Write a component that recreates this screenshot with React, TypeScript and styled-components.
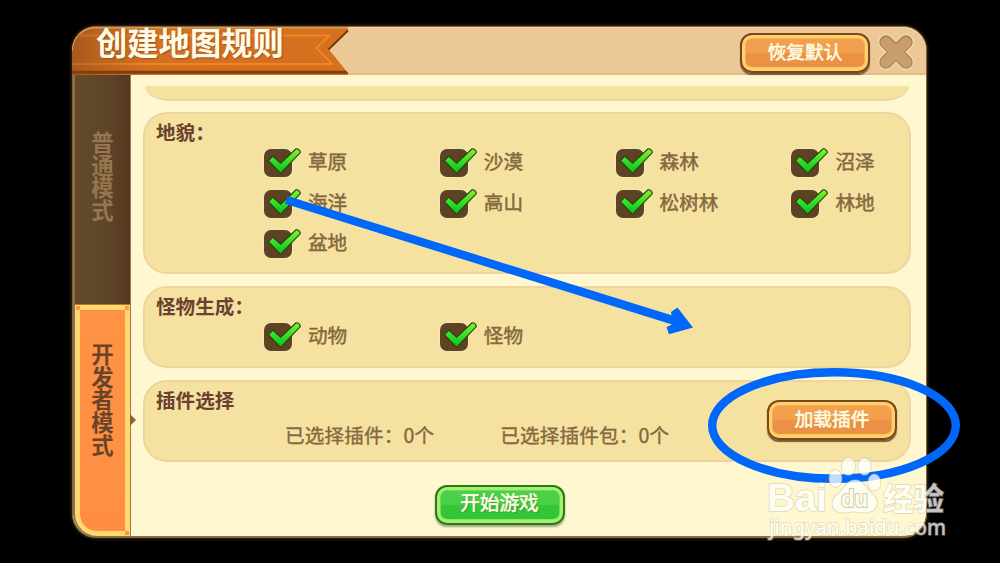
import styled, { createGlobalStyle, css } from 'styled-components';

const TERRAINS = ['草原', '沙漠', '森林', '沼泽', '海洋', '高山', '松树林', '林地', '盆地'];
const CREATURES = ['动物', '怪物'];

export default function App() {
  return (
    <>
      <GlobalStyle />
      <Screen>
        <Dialog>
          <Header>
            <Ribbon />
            <Title>创建地图规则</Title>
            <HeaderActions>
              <GameButton $tone="orange">
                <ButtonText $tone="orange">恢复默认</ButtonText>
              </GameButton>
              <CloseIcon />
            </HeaderActions>
          </Header>
          <Body>
            <Sidebar>
              <NormalTab>普通模式</NormalTab>
              <DeveloperTab>
                <TabCorner $vertical="top" $horizontal="left" />
                <TabCorner $vertical="top" $horizontal="right" />
                <TabCorner $vertical="bottom" $horizontal="right" />
                开发者模式
                <TabPointer />
              </DeveloperTab>
            </Sidebar>
            <Content>
              <ClippedCard />
              <Card $height={162}>
                <CardTitle>地貌：</CardTitle>
                <OptionList items={TERRAINS} />
              </Card>
              <Card $height={82}>
                <CardTitle>怪物生成：</CardTitle>
                <OptionList items={CREATURES} />
              </Card>
              <Card $height={82}>
                <CardTitle>插件选择</CardTitle>
                <PluginRow>
                  <PluginCount>已选择插件：0个</PluginCount>
                  <PluginCount>已选择插件包：0个</PluginCount>
                </PluginRow>
                <LoadButton $tone="orange">
                  <ButtonText $tone="orange">加载插件</ButtonText>
                </LoadButton>
              </Card>
              <StartRow>
                <GameButton $tone="green">
                  <ButtonText $tone="green">开始游戏</ButtonText>
                </GameButton>
              </StartRow>
            </Content>
          </Body>
        </Dialog>
        <Annotations />
        <Watermark />
      </Screen>
    </>
  );
}

function OptionList({ items }: { items: string[] }) {
  return (
    <OptionGrid>
      {items.map((item) => (
        <Option key={item}>
          <CheckIcon />
          <OptionLabel>{item}</OptionLabel>
        </Option>
      ))}
    </OptionGrid>
  );
}

function CheckIcon() {
  return (
    <svg width="40" height="32" viewBox="0 0 40 32">
      <defs>
        <linearGradient id="tick" x1="0" y1="0" x2="0" y2="1">
          <stop offset="0" stopColor="#7ff52c" />
          <stop offset="0.55" stopColor="#2fdc27" />
          <stop offset="1" stopColor="#10bd24" />
        </linearGradient>
      </defs>
      <rect x="1.4" y="2.4" width="29.2" height="29.2" rx="7.4" fill="#f9edbd" />
      <rect x="2" y="3" width="28" height="28" rx="7" fill="#5d4223" />
      <path
        d="M7.2 14.8 L10.8 11 L18.6 18 L34.2 3.4 Q36.6 3 37.9 6.3 L18.6 26.5 Z"
        fill="url(#tick)"
        stroke="#274409"
        strokeWidth="2.2"
        strokeLinejoin="round"
        paintOrder="stroke"
      />
    </svg>
  );
}

function CloseIcon() {
  return (
    <svg width="38" height="38" viewBox="0 0 38 38">
      <g fill="none" strokeLinecap="round">
        <path d="M9 9 L29 29 M29 9 L9 29" stroke="#f5e0b4" strokeWidth="15.4" />
        <path d="M9 9 L29 29 M29 9 L9 29" stroke="#a98252" strokeWidth="13.4" />
        <path d="M9 9.5 L29 29 M29 9.5 L9 29" stroke="#c79e6c" strokeWidth="11" />
      </g>
    </svg>
  );
}

function Ribbon() {
  return (
    <RibbonSvg width="278" height="48" viewBox="0 0 278 48">
      <defs>
        <linearGradient id="ribbon" x1="0" y1="0" x2="1" y2="0">
          <stop offset="0" stopColor="#a65a1d" />
          <stop offset="0.1" stopColor="#bb641d" />
          <stop offset="0.28" stopColor="#d27021" />
          <stop offset="1" stopColor="#d6701f" />
        </linearGradient>
        <linearGradient id="ribbonLine" x1="0" y1="0" x2="1" y2="0">
          <stop offset="0" stopColor="#c06820" />
          <stop offset="0.3" stopColor="#f08522" />
        </linearGradient>
        <clipPath id="ribbonShape">
          <path d="M0 48 V23 A23 23 0 0 1 23 0 H276 V3.5 L256.5 22 L276 46 V48 Z" />
        </clipPath>
      </defs>
      <g clipPath="url(#ribbonShape)">
        <rect width="278" height="48" fill="url(#ribbon)" />
        <path d="M0 24 A23 23 0 0 1 23 0.8 H277" fill="none" stroke="#d69a58" strokeWidth="1.6" />
        <path d="M0 45.3 H276" stroke="#803f0c" strokeWidth="3" />
        <path d="M5 8.5 H257.5 L244.5 21 L260.5 37 H0" fill="none" stroke="url(#ribbonLine)" strokeWidth="1.8" />
      </g>
      <path d="M276 3.5 L256.5 22.5" stroke="#713804" strokeWidth="1.8" />
    </RibbonSvg>
  );
}

function Annotations() {
  return (
    <Overlay width="1000" height="563" viewBox="0 0 1000 563">
      <path
        d="M287.5 196 L671.5 315.3 L671 312 L677.5 307.5 L693 327.5 L669 334.3 L666.5 327 L672 324.5 L285 203.8 Z"
        fill="#0067fb"
      />
      <ellipse cx="834" cy="425.5" rx="121.8" ry="53.2" fill="none" stroke="#0067fb" strokeWidth="8.4" />
    </Overlay>
  );
}

function Watermark() {
  return (
    <WatermarkSvg width="190" height="104" viewBox="0 0 190 104">
      <g fill="#ffffff" stroke="#bdb69c" strokeOpacity="0.6" strokeWidth="1.6" paintOrder="stroke">
        <BrandText x="7" y="60" fontSize="39.5" textLength="60" lengthAdjust="spacingAndGlyphs">
          Bai
        </BrandText>
        <ellipse cx="75.5" cy="27.5" rx="6.3" ry="8.6" />
        <ellipse cx="88.5" cy="15.5" rx="6.7" ry="8.8" />
        <ellipse cx="104.5" cy="15.5" rx="6.5" ry="8.6" />
        <ellipse cx="114.3" cy="31.5" rx="6.3" ry="8.2" />
        <path d="M95 29 C103 29 105 37 112 43 C120 49 118 61 106 61.5 C101 62 98 60.5 94.5 60.5 C90 60.5 87 62 82.5 61.5 C70 61 70 49 78 43 C85 37 87 29 95 29 Z" />
        <text x="123" y="58.5" fontSize="31" fontWeight="700" textLength="61" lengthAdjust="spacingAndGlyphs">
          经验
        </text>
        <text x="9" y="84" fontSize="22.5" fontWeight="500" textLength="177" lengthAdjust="spacingAndGlyphs">
          jingyan.baidu.com
        </text>
      </g>
      <BrandText
        x="81"
        y="56"
        fontSize="23"
        fill="#fffdf2"
        stroke="#c4bc9c"
        strokeWidth="2"
        textLength="27"
        lengthAdjust="spacingAndGlyphs"
      >
        du
      </BrandText>
    </WatermarkSvg>
  );
}

const GlobalStyle = createGlobalStyle`
  * {
    box-sizing: border-box;
  }

  body {
    margin: 0;
    background: #000;
    font-family: 'Noto Sans CJK SC', sans-serif;
  }
`;

const Screen = styled.main`
  position: relative;
  width: 1000px;
  height: 563px;
  padding: 26px 0 0 72px;
  overflow: hidden;
  background: #000;
`;

const Dialog = styled.section`
  display: flex;
  flex-direction: column;
  width: 855px;
  height: 512px;
  border: 1px solid #80633c;
  border-bottom: 2px solid #8a6d43;
  border-radius: 24px;
  background: #fef7cf;
  box-shadow: 0 0 3px 1px #3a2710;
`;

const Header = styled.header`
  position: relative;
  display: flex;
  flex: none;
  align-items: flex-start;
  justify-content: space-between;
  height: 48px;
  padding: 0 11px 0 23px;
  border-top: 1px solid #f4d9ac;
  border-bottom: 2px solid #dfbd8a;
  border-radius: 23px 23px 0 0;
  background: #ebc896;
`;

const RibbonSvg = styled.svg`
  position: absolute;
  top: -1px;
  left: -1px;
`;

const Title = styled.h1`
  position: relative;
  margin: 0;
  color: #fffbe6;
  font-size: 31.3px;
  font-weight: 700;
  line-height: 27px;
  text-shadow: 1px 1px 1px #98571d;
`;

const HeaderActions = styled.div`
  display: flex;
  align-items: flex-start;
  gap: 7px;
  padding-top: 5px;
`;

type Tone = 'orange' | 'green';

const orangeTone = css`
  border-color: #7d451d;
  background: linear-gradient(#f3a04e 48%, #ec9045 52%);
  box-shadow:
    inset 0 0 0 3px #fbd36d,
    inset 0 -4px 0 #fbc85e,
    inset 0 0 0 4px #f6ad54,
    0 2px 1px #7a5a35;
`;

const greenTone = css`
  border-color: #267d13;
  background: linear-gradient(#49d14a 48%, #34c635 52%);
  box-shadow:
    inset 0 0 0 3px #a7ed72,
    inset 0 -4px 0 #8de466,
    inset 0 0 0 4px #72d95a,
    0 2px 2px #a4a384;
`;

const GameButton = styled.button<{ $tone: Tone }>`
  display: flex;
  align-items: flex-start;
  justify-content: center;
  width: 130px;
  height: 40px;
  padding: ${({ $tone }) => ($tone === 'orange' ? '3px' : '2px')} 0 0;
  border: 2px solid;
  border-radius: 12px;
  font-family: inherit;
  ${({ $tone }) => ($tone === 'orange' ? orangeTone : greenTone)}
`;

const ButtonText = styled.span<{ $tone: Tone }>`
  color: #fffbe0;
  font-size: ${({ $tone }) => ($tone === 'orange' ? '18.7px' : '19.6px')};
  line-height: 26px;
  -webkit-text-stroke: 0.6px #fffbe0;
  text-shadow: ${({ $tone }) => ($tone === 'orange' ? '0 1px 1px #d98a3d' : '1px 1px 1px #278a25')};
`;

const Body = styled.div`
  display: flex;
  flex: 1;
  min-height: 0;
`;

const Sidebar = styled.nav`
  display: flex;
  flex: none;
  flex-direction: column;
  width: 58px;
  border-right: 1px solid #9b7a52;
  border-left: 2px solid #8b7048;
  border-bottom-left-radius: 23px;
  background: linear-gradient(90deg, #634a29, #5f4528 60%, #543720);
`;

const tabText = css`
  font-size: 22.4px;
  font-weight: 700;
  line-height: 22.7px;
  text-align: center;
`;

const NormalTab = styled.div`
  ${tabText}
  height: 230px;
  padding: 55px 16px 0;
  color: #957650;
`;

const DeveloperTab = styled.div`
  ${tabText}
  position: relative;
  flex: 1;
  padding: 32px 11px 0;
  border: 5px solid #ffd86f;
  border-bottom-left-radius: 22px;
  background: linear-gradient(#ff9243, #ff8e44);
  color: #6a4429;
  box-shadow: 0 -1px 0 #ae7732;
`;

const TabCorner = styled.i<{ $vertical: 'top' | 'bottom'; $horizontal: 'left' | 'right' }>`
  position: absolute;
  ${({ $vertical }) => $vertical}: -4px;
  ${({ $horizontal }) => $horizontal}: -4px;
  width: 4px;
  height: 4px;
  background: #ff9546;
`;

const TabPointer = styled.i`
  position: absolute;
  top: 104px;
  right: -11px;
  width: 6px;
  height: 12px;
  background: #8d6536;
  clip-path: polygon(0 0, 100% 50%, 0 100%);
`;

const Content = styled.div`
  display: flex;
  flex: 1;
  flex-direction: column;
  gap: 12px;
  min-width: 0;
  padding: 11px 15px 0 12px;
`;

const ClippedCard = styled.div`
  height: 15px;
  margin: 0 2px -1px;
  border-bottom: 2px solid #eed69f;
  border-radius: 0 0 24px 24px / 0 0 15px 15px;
  background: #f5e2a1;
`;

const Card = styled.section<{ $height: number }>`
  position: relative;
  flex: none;
  height: ${({ $height }) => $height}px;
  padding: 6px 0 0 11px;
  border: 2px solid #eed59f;
  border-radius: 24px;
  background: #f5e2a1;
`;

const CardTitle = styled.h2`
  margin: 0;
  color: #6b4130;
  font-size: 19.6px;
  font-weight: 700;
  line-height: 24px;
`;

const OptionGrid = styled.div`
  display: grid;
  grid-template-columns: repeat(4, 175.8px);
  grid-auto-rows: 40.7px;
  padding: 1px 0 0 106px;
`;

const Option = styled.label`
  display: flex;
  align-items: flex-start;
  gap: 6px;
  padding-top: 1px;
`;

const OptionLabel = styled.span`
  margin-top: 1px;
  color: #86683f;
  font-size: 19.6px;
  line-height: 28px;
  white-space: nowrap;
  -webkit-text-stroke: 0.5px #86683f;
`;

const PluginRow = styled.div`
  display: flex;
  gap: 66px;
  padding: 11px 0 0 129px;
`;

const PluginCount = styled.span`
  color: #86683f;
  font-size: 19.6px;
  letter-spacing: 0.15px;
  line-height: 24px;
  white-space: nowrap;
  -webkit-text-stroke: 0.4px #86683f;
`;

const LoadButton = styled(GameButton)`
  position: absolute;
  top: 18px;
  right: 12px;
`;

const StartRow = styled.div`
  display: flex;
  justify-content: center;
  padding: 11px 55px 0 0;
`;

const Overlay = styled.svg`
  position: absolute;
  top: 0;
  left: 0;
  pointer-events: none;
`;

const WatermarkSvg = styled.svg`
  position: absolute;
  top: 451px;
  left: 760px;
  opacity: 0.76;
  font-family: 'Noto Sans', 'Noto Sans CJK SC', sans-serif;
  pointer-events: none;
`;

const BrandText = styled.text`
  font-family: 'Liberation Sans', sans-serif;
  font-weight: 700;
  paint-order: stroke;
`;
